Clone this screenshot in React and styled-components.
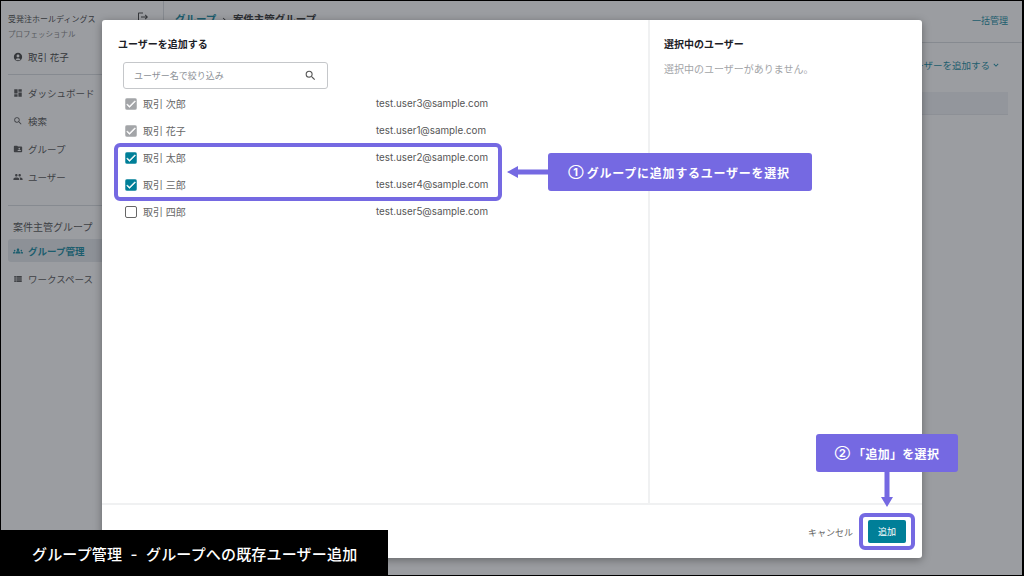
import React from "react";
import styled, { createGlobalStyle } from "styled-components";
import { MdAccountCircle, MdDashboard, MdFolderShared, MdPeople, MdGroups, MdViewList, MdSearch, MdCheck, MdKeyboardArrowDown, MdKeyboardArrowRight, MdLogout } from "react-icons/md";

const Global = createGlobalStyle`
  html, body { margin: 0; padding: 0; background: #000; }
  body { font-family: Inter, "Noto Sans CJK JP", sans-serif; overflow: hidden; }
  * { box-sizing: border-box; }
`;
const teal = "#007f98";
const violet = "#7569e2";

const Frame = styled.div`
  position: relative; width: 1024px; height: 576px; overflow: hidden;
  display: flex; background: #fff; color: #333;
  &::after { content: ""; position: absolute; inset: 0; z-index: 9; pointer-events: none;
    border: solid #000; border-width: 1px 2px 1px 1px; }
`;
const Sidebar = styled.aside`
  width: 164px; flex: none; border-right: 1px solid #d5d8dc; padding: 13px 8px 0;
  display: flex; flex-direction: column;
`;
const Org = styled.div`
  display: flex; justify-content: space-between; align-items: center;
  font-size: 8px; line-height: 12px; color: #333; svg { font-size: 12px; margin-right: 6px; margin-top: -4px; }
`;
const Plan = styled.div`font-size: 7.5px; line-height: 12px; margin-top: 4px; color: #777;`;
const Me = styled.div`
  display: flex; align-items: center; gap: 5px; height: 20px; margin-top: 6px; margin-left: 5px; font-size: 9.5px;
  svg { font-size: 10px; }
`;
const Rule = styled.hr`border: 0; border-top: 1px solid #d5d8dc; margin: ${p => p.$m}; `;
const Nav = styled.div`display: flex; flex-direction: column; gap: ${p => p.$gap || 8}px;`;
const NavItem = styled.div`
  display: flex; align-items: center; gap: 5px; height: 20px; padding-left: 5px; font-size: 9.5px; color: #444;
  svg { font-size: 10px; flex: none; }
`;
const Group = styled.div`font-size: 10px; line-height: 14px; margin: 14px 0 5px 5px; color: #444;`;
const ActiveItem = styled(NavItem)`
  height: 23px; background: #e3e6ea; border-radius: 3px; color: ${teal}; font-weight: 700;
`;
const Main = styled.main`flex: 1; display: flex; flex-direction: column; padding-right: 16px;`;
const TopBar = styled.div`
  height: 43px; margin-right: -16px; padding: 13px 16px 0 11px; display: flex; justify-content: space-between;
  border-bottom: 1px solid #d5d8dc; font-size: 9px; line-height: 14px;
`;
const Crumb = styled.div`display: flex; align-items: center; height: 14px; gap: 3px; font-weight: 700; font-size: 10.5px; color: #222;
  span:first-child { color: ${teal}; }`;
const Bulk = styled.span`color: ${teal}; margin-top: 1px;`;
const Actions = styled.div`
  height: 44px; margin-bottom: 5px; display: flex; align-items: center; justify-content: flex-end; font-size: 9.5px; color: ${teal}; gap: 1px; padding: 0 7px 0 0; svg { font-size: 10px; }
`;
const TableHead = styled.div`height: 23px; background: #eff1f4; border-bottom: 1px solid #e3e5e8;`;

const Overlay = styled.div`
  position: absolute; inset: 0; z-index: 2; background: rgba(55, 60, 68, .5);
  padding: 20px 102px 18px; display: flex;
`;
const Modal = styled.div`
  flex: 1; background: #fff; border-radius: 3px; box-shadow: 0 2px 8px rgba(0,0,0,.35);
  display: flex; flex-direction: column;
`;
const Body = styled.div`flex: 1; display: flex; min-height: 0;`;
const Left = styled.section`width: 548px; padding: 17px 16px; border-right: 2px solid #f0f1f2;`;
const Right = styled.section`flex: 1; padding: 17px 14px;`;
const Title = styled.h2`margin: 0; font-size: 10px; line-height: 14px; font-weight: 700; color: #1c2026;`;
const Search = styled.div`
  margin: 11px 0 0 5px; width: 205px; height: 27px; border: 1px solid #c5c7ca; border-radius: 3px;
  display: flex; align-items: center; justify-content: space-between; padding: 0 11px 0 10px; color: #8d9197; font-size: 9px;
  svg { font-size: 13px; color: #555; margin-right: -1px; }
`;
const Rows = styled.div`margin: 1px 0 0 5px;`;
const Row = styled.div`display: flex; align-items: center; height: 27px; font-size: 10px; color: #666;`;
const Box = styled.span`
  width: 12px; height: 12px; border-radius: 2px; flex: none; display: flex; align-items: center; justify-content: center;
  margin: 0 6px 0 2px; color: #fff; font-size: 12px;
  background: ${p => p.$state === "on" ? teal : p.$state === "locked" ? "#a3a5a8" : "#fff"};
  border: ${p => p.$state === "off" ? "1.5px solid #666" : "none"};
  svg { stroke: #fff; stroke-width: 1; }
`;
const Name = styled.span`width: 233px;`;
const Email = styled.span`font-size: 9.8px; color: #555;`;
const Empty = styled.p`margin: 11px 0 0; font-size: 10px; line-height: 14px; color: #a2a4a7;`;
const Footer = styled.footer`
  height: 55px; flex: none; border-top: 2px solid #f0f1f2; display: flex; align-items: center; justify-content: flex-end;
  padding: 0 16px 0 0; gap: 15px;
`;
const Cancel = styled.span`font-size: 9px; color: #666; margin-top: 1px;`;
const Add = styled.button`
  width: 38px; height: 23px; border: 0; border-radius: 2px; background: ${teal}; color: #fff; font: inherit; font-size: 9px; padding: 0;
`;
const Highlight = styled.div`
  position: absolute; z-index: 3; border: 4px solid ${violet};
  left: ${p => p.$l}px; top: ${p => p.$t}px; width: ${p => p.$w}px; height: ${p => p.$h}px; border-radius: ${p => p.$r}px;
`;
const Callout = styled.div`
  position: absolute; z-index: 3; background: ${violet}; color: #fff; font-weight: 700; font-size: 12px; border-radius: 3px;
  letter-spacing: ${p => p.$track}px; padding-right: ${p => p.$pr}px;
  display: flex; align-items: center; justify-content: center; height: 38px;
  left: ${p => p.$l}px; top: ${p => p.$t}px; width: ${p => p.$w}px;
`;
const Num = styled.span`font-size: 11px; margin-right: 3px; letter-spacing: 0;`;
const Arrow = styled.svg`position: absolute; z-index: 3; left: ${p => p.$l}px; top: ${p => p.$t}px;`;
const Caption = styled.div`
  position: absolute; z-index: 10; left: 0; bottom: 0; width: 388px; height: 46px; background: #000; color: #fff;
  font-size: 15px; display: flex; align-items: center; padding-left: 32px; white-space: pre; font-weight: 500; letter-spacing: .18px;
`;

const users = [
  ["取引 次郎", "test.user3@sample.com", "locked"],
  ["取引 花子", "test.user1@sample.com", "locked"],
  ["取引 太郎", "test.user2@sample.com", "on"],
  ["取引 三郎", "test.user4@sample.com", "on"],
  ["取引 四郎", "test.user5@sample.com", "off"],
];

export default function App() {
  return (
    <Frame>
      <Global />
      <Sidebar>
        <Org>受発注ホールディングス<MdLogout /></Org>
        <Plan>プロフェッショナル</Plan>
        <Me><MdAccountCircle />取引 花子</Me>
        <Rule $m="7px 0 8px" />
        <Nav>
          <NavItem><MdDashboard />ダッシュボード</NavItem>
          <NavItem><MdSearch />検索</NavItem>
          <NavItem><MdFolderShared />グループ</NavItem>
          <NavItem><MdPeople />ユーザー</NavItem>
        </Nav>
        <Rule $m="18px 0 0" />
        <Group>案件主管グループ</Group>
        <Nav $gap={7}>
          <ActiveItem><MdGroups />グループ管理</ActiveItem>
          <NavItem><MdViewList />ワークスペース</NavItem>
        </Nav>
      </Sidebar>
      <Main>
        <TopBar>
          <Crumb><span>グループ</span><MdKeyboardArrowRight /><span>案件主管グループ</span></Crumb>
          <Bulk>一括管理</Bulk>
        </TopBar>
        <Actions>ユーザーを追加する<MdKeyboardArrowDown /></Actions>
        <TableHead />
      </Main>
      <Overlay>
        <Modal>
          <Body>
            <Left>
              <Title>ユーザーを追加する</Title>
              <Search>ユーザー名で絞り込み<MdSearch /></Search>
              <Rows>
                {users.map(([name, email, state]) => (
                  <Row key={email}>
                    <Box $state={state}>{state !== "off" && <MdCheck />}</Box>
                    <Name>{name}</Name>
                    <Email>{email}</Email>
                  </Row>
                ))}
              </Rows>
            </Left>
            <Right>
              <Title>選択中のユーザー</Title>
              <Empty>選択中のユーザーがありません。</Empty>
            </Right>
          </Body>
          <Footer>
            <Cancel>キャンセル</Cancel>
            <Add>追加</Add>
          </Footer>
        </Modal>
      </Overlay>
      <Highlight $l={114} $t={143} $w={388} $h={58} $r={6} />
      <Highlight $l={859} $t={513} $w={56} $h={37} $r={6} />
      <Arrow $l={507} $t={165} width="41" height="14" viewBox="0 0 41 14"><path d="M0 7 L11 1 V4.5 H41 V9.5 H11 V13 Z" fill={violet} /></Arrow>
      <Arrow $l={880} $t={472} width="14" height="35" viewBox="0 0 14 35"><path d="M4.5 0 H9.5 V25 H13 L7 35 L1 25 H4.5 Z" fill={violet} /></Arrow>
      <Callout $l={548} $t={153} $w={264} $track={0.75} $pr={2}><Num>①</Num>グループに追加するユーザーを選択</Callout>
      <Callout $l={816} $t={434} $w={142} $track={0.3} $pr={0}><Num>②</Num>「追加」を選択</Callout>
      <Caption>グループ管理  -  グループへの既存ユーザー追加</Caption>
    </Frame>
  );
}
